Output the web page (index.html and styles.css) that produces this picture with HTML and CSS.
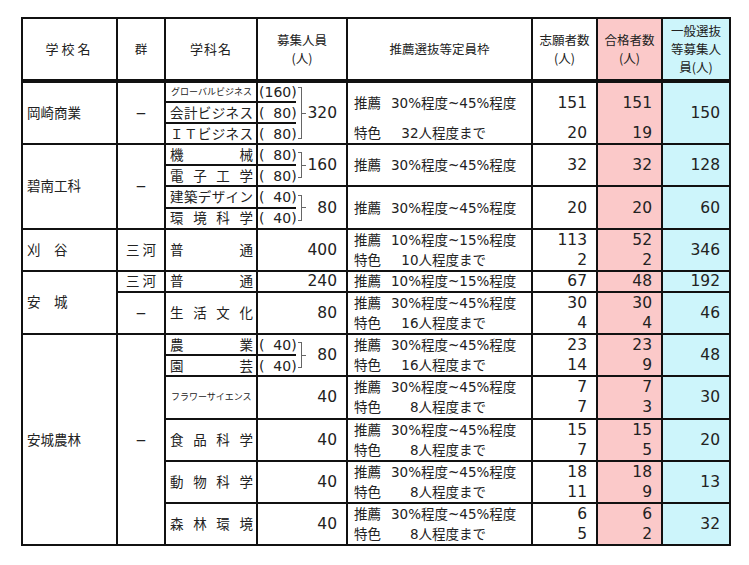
FILE: index.html
```html
<!DOCTYPE html>
<html lang="ja">
<head>
<meta charset="utf-8">
<title>入学者選抜 結果</title>
<link rel="stylesheet" href="styles.css">
</head>
<body>
<div class="sheet">
<table class="t">
  <colgroup>
    <col class="c1"><col class="c2"><col class="c3"><col class="c4a"><col class="c4b"><col class="c5"><col class="c6"><col class="c7"><col class="c8">
  </colgroup>
  <thead>
    <tr class="head">
      <th class="wide">学校名</th>
      <th>群</th>
      <th class="mid">学科名</th>
      <th colspan="2">募集人員<br>(人)</th>
      <th>推薦選抜等定員枠</th>
      <th>志願者数<br>(人)</th>
      <th class="pk">合格者数<br>(人)</th>
      <th class="cy">一般選抜<br>等募集人<br>員(人)</th>
    </tr>
  </thead>
  <tbody>
    <!-- 岡崎商業 -->
    <tr>
      <td class="sc" rowspan="3">岡崎商業</td>
      <td class="gn" rowspan="3">−</td>
      <td class="nm sm">グローバルビジネス</td>
      <td class="par">(<span class="pn">160</span>)</td>
      <td class="tot" rowspan="3"><div class="bk"><span class="brk b3"></span><span class="tick"></span><span class="tn">320</span></div></td>
      <td class="sel" rowspan="2"><span class="lb">推薦</span>30%程度~45%程度</td>
      <td class="n" rowspan="2">151</td>
      <td class="n pk" rowspan="2">151</td>
      <td class="n cy" rowspan="3">150</td>
    </tr>
    <tr>
      <td class="nm"><span class="j">会計ビジネス</span></td>
      <td class="par">(<span class="pn">80</span>)</td>
    </tr>
    <tr>
      <td class="nm"><span class="j">ＩＴビジネス</span></td>
      <td class="par">(<span class="pn">80</span>)</td>
      <td class="sel nt"><span class="lb">特色</span><span class="r">32人程度まで</span></td>
      <td class="n nt">20</td>
      <td class="n pk nt">19</td>
    </tr>

    <!-- 碧南工科 -->
    <tr>
      <td class="sc" rowspan="4">碧南工科</td>
      <td class="gn" rowspan="4">−</td>
      <td class="nm"><span class="j">機械</span></td>
      <td class="par">(<span class="pn">80</span>)</td>
      <td class="tot" rowspan="2"><div class="bk"><span class="brk b2"></span><span class="tick"></span><span class="tn">160</span></div></td>
      <td class="sel" rowspan="2"><span class="lb">推薦</span>30%程度~45%程度</td>
      <td class="n" rowspan="2">32</td>
      <td class="n pk" rowspan="2">32</td>
      <td class="n cy" rowspan="2">128</td>
    </tr>
    <tr>
      <td class="nm"><span class="j">電子工学</span></td>
      <td class="par">(<span class="pn">80</span>)</td>
    </tr>
    <tr>
      <td class="nm"><span class="j">建築デザイン</span></td>
      <td class="par">(<span class="pn">40</span>)</td>
      <td class="tot" rowspan="2"><div class="bk"><span class="brk b2"></span><span class="tick"></span><span class="tn">80</span></div></td>
      <td class="sel" rowspan="2"><span class="lb">推薦</span>30%程度~45%程度</td>
      <td class="n" rowspan="2">20</td>
      <td class="n pk" rowspan="2">20</td>
      <td class="n cy" rowspan="2">60</td>
    </tr>
    <tr>
      <td class="nm"><span class="j">環境科学</span></td>
      <td class="par">(<span class="pn">40</span>)</td>
    </tr>

    <!-- 刈谷 -->
    <tr>
      <td class="sc" rowspan="2">刈　谷</td>
      <td class="gn" rowspan="2"><span class="j">三河</span></td>
      <td class="nm" rowspan="2"><span class="j">普通</span></td>
      <td class="n tw" colspan="2" rowspan="2">400</td>
      <td class="sel"><span class="lb">推薦</span>10%程度~15%程度</td>
      <td class="n">113</td>
      <td class="n pk">52</td>
      <td class="n cy" rowspan="2">346</td>
    </tr>
    <tr>
      <td class="sel nt"><span class="lb">特色</span><span class="r">10人程度まで</span></td>
      <td class="n nt">2</td>
      <td class="n pk nt">2</td>
    </tr>

    <!-- 安城 -->
    <tr>
      <td class="sc" rowspan="3">安　城</td>
      <td class="gn"><span class="j">三河</span></td>
      <td class="nm"><span class="j">普通</span></td>
      <td class="n tw" colspan="2">240</td>
      <td class="sel"><span class="lb">推薦</span>10%程度~15%程度</td>
      <td class="n">67</td>
      <td class="n pk">48</td>
      <td class="n cy">192</td>
    </tr>
    <tr>
      <td class="gn" rowspan="2">−</td>
      <td class="nm" rowspan="2"><span class="j">生活文化</span></td>
      <td class="n tw" colspan="2" rowspan="2">80</td>
      <td class="sel"><span class="lb">推薦</span>30%程度~45%程度</td>
      <td class="n">30</td>
      <td class="n pk">30</td>
      <td class="n cy" rowspan="2">46</td>
    </tr>
    <tr>
      <td class="sel nt"><span class="lb">特色</span><span class="r">16人程度まで</span></td>
      <td class="n nt">4</td>
      <td class="n pk nt">4</td>
    </tr>

    <!-- 安城農林 -->
    <tr>
      <td class="sc" rowspan="10">安城農林</td>
      <td class="gn" rowspan="10">−</td>
      <td class="nm"><span class="j">農業</span></td>
      <td class="par">(<span class="pn">40</span>)</td>
      <td class="tot" rowspan="2"><div class="bk"><span class="brk b2"></span><span class="tick"></span><span class="tn">80</span></div></td>
      <td class="sel"><span class="lb">推薦</span>30%程度~45%程度</td>
      <td class="n">23</td>
      <td class="n pk">23</td>
      <td class="n cy" rowspan="2">48</td>
    </tr>
    <tr>
      <td class="nm"><span class="j">園芸</span></td>
      <td class="par">(<span class="pn">40</span>)</td>
      <td class="sel nt"><span class="lb">特色</span><span class="r">16人程度まで</span></td>
      <td class="n nt">14</td>
      <td class="n pk nt">9</td>
    </tr>
    <tr>
      <td class="nm sm" rowspan="2">フラワーサイエンス</td>
      <td class="n tw" colspan="2" rowspan="2">40</td>
      <td class="sel"><span class="lb">推薦</span>30%程度~45%程度</td>
      <td class="n">7</td>
      <td class="n pk">7</td>
      <td class="n cy" rowspan="2">30</td>
    </tr>
    <tr>
      <td class="sel nt"><span class="lb">特色</span><span class="r">8人程度まで</span></td>
      <td class="n nt">7</td>
      <td class="n pk nt">3</td>
    </tr>
    <tr>
      <td class="nm" rowspan="2"><span class="j">食品科学</span></td>
      <td class="n tw" colspan="2" rowspan="2">40</td>
      <td class="sel"><span class="lb">推薦</span>30%程度~45%程度</td>
      <td class="n">15</td>
      <td class="n pk">15</td>
      <td class="n cy" rowspan="2">20</td>
    </tr>
    <tr>
      <td class="sel nt"><span class="lb">特色</span><span class="r">8人程度まで</span></td>
      <td class="n nt">7</td>
      <td class="n pk nt">5</td>
    </tr>
    <tr>
      <td class="nm" rowspan="2"><span class="j">動物科学</span></td>
      <td class="n tw" colspan="2" rowspan="2">40</td>
      <td class="sel"><span class="lb">推薦</span>30%程度~45%程度</td>
      <td class="n">18</td>
      <td class="n pk">18</td>
      <td class="n cy" rowspan="2">13</td>
    </tr>
    <tr>
      <td class="sel nt"><span class="lb">特色</span><span class="r">8人程度まで</span></td>
      <td class="n nt">11</td>
      <td class="n pk nt">9</td>
    </tr>
    <tr>
      <td class="nm" rowspan="2"><span class="j">森林環境</span></td>
      <td class="n tw" colspan="2" rowspan="2">40</td>
      <td class="sel"><span class="lb">推薦</span>30%程度~45%程度</td>
      <td class="n">6</td>
      <td class="n pk">6</td>
      <td class="n cy" rowspan="2">32</td>
    </tr>
    <tr>
      <td class="sel nt"><span class="lb">特色</span><span class="r">8人程度まで</span></td>
      <td class="n nt">5</td>
      <td class="n pk nt">2</td>
    </tr>
  </tbody>
</table>
</div>
</body>
</html>
```

FILE: styles.css
```css
body {
  margin: 0;
  background: #ffffff;
}

.sheet {
  padding: 17px 0 0 21px;
}

.t {
  border-collapse: collapse;
  table-layout: fixed;
  width: 710px;
  font-family: "DejaVu Sans", "Noto Sans CJK JP", sans-serif;
  color: #222;
  border: 2px solid #111;
}

.c1 { width: 95px; }
.c2 { width: 48px; }
.c3 { width: 92px; }
.c4a { width: 39px; }
.c4b { width: 51px; }
.c5 { width: 185px; }
.c6 { width: 65px; }
.c7 { width: 65px; }
.c8 { width: 68px; }

th, td {
  border-left: 2px solid #111;
  border-right: 2px solid #111;
  border-top: 2px solid #111;
  border-bottom: none;
  padding: 0;
  vertical-align: middle;
  white-space: nowrap;
  overflow: hidden;
}

tbody tr {
  height: 21.1px;
}

.head {
  height: 63px;
}

th {
  font-weight: normal;
  font-size: 12.5px;
  line-height: 18px;
  text-align: center;
  border-bottom: 4px solid #111;
  font-family: "Noto Sans CJK JP", sans-serif;
}

th.wide { letter-spacing: 3px; font-size: 13px; }
th.mid { letter-spacing: 1px; font-size: 13px; }

td {
  font-size: 13.5px;
  line-height: 18px;
}

td.nt { border-top: none; }

.pk { background: #fbc9c9; }
.cy { background: #cdf5fb; }

.sc {
  padding-left: 4px;
  text-align: left;
}

.gn {
  text-align: center;
  padding: 0 8px;
}

.nm {
  padding: 0 3px 0 4px;
}

.nm.sm {
  font-size: 9px;
  padding-left: 5px;
}

.j {
  display: block;
  text-align: justify;
  text-align-last: justify;
}

.par {
  border-right: none;
  font-size: 14px;
  padding-left: 1px;
}

.pn {
  display: inline-block;
  width: 3ch;
  text-align: right;
}

.tot {
  border-left: none;
}

.bk {
  display: flex;
  align-items: center;
  padding: 0 9px 0 2px;
}

.brk {
  width: 3px;
  border: 1px solid #666;
  border-left: none;
}

.b3 { height: 50px; }
.b2 { height: 24px; }

.tick {
  width: 4px;
  height: 1px;
  background: #666;
}

.tn {
  margin-left: auto;
  font-size: 15.5px;
}

.n {
  text-align: right;
  padding-right: 9px;
  font-size: 15.5px;
}

.tw {
  padding-right: 9px;
}

.sel {
  padding-left: 6px;
}

.lb {
  display: inline-block;
  width: 37px;
}

.r {
  display: inline-block;
  width: 95px;
  text-align: right;
}
```
